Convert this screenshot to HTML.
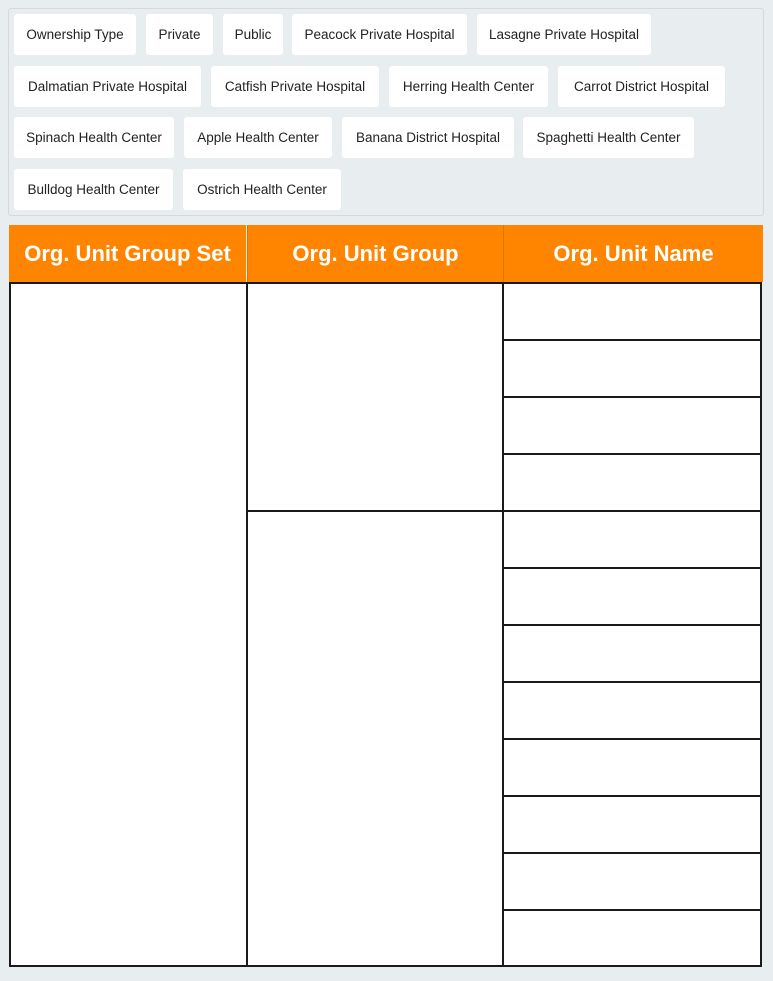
<!DOCTYPE html><html><head><style>
body{margin:0;width:773px;height:981px;background:#e8edf0;position:relative;overflow:hidden;font-family:"Liberation Sans",sans-serif}
.p{position:absolute;left:8px;top:8px;width:754px;height:206px;border:1px solid #d3d9dd;border-radius:3px;background:#e8edf0}
.c{position:absolute;height:41px;line-height:42px;background:#fff;border-radius:3px;font-size:13.5px;color:#222;text-align:center;white-space:nowrap}
.h{position:absolute;top:225px;height:57px;background:#ff8500;color:#fff;font-weight:bold;font-size:22px;line-height:58px;text-align:center}
.w{position:absolute;left:9px;top:282px;width:753px;height:685px;background:#fff}
.v{position:absolute;width:2px;background:#1a1a1a}
.l{position:absolute;height:2px;background:#1a1a1a}
</style></head><body>
<div class="p"></div>
<div class="c" style="left:14px;top:14px;width:122px">Ownership Type</div>
<div class="c" style="left:146px;top:14px;width:67px">Private</div>
<div class="c" style="left:223px;top:14px;width:60px">Public</div>
<div class="c" style="left:292px;top:14px;width:175px">Peacock Private Hospital</div>
<div class="c" style="left:477px;top:14px;width:174px">Lasagne Private Hospital</div>
<div class="c" style="left:14px;top:66px;width:187px">Dalmatian Private Hospital</div>
<div class="c" style="left:211px;top:66px;width:168px">Catfish Private Hospital</div>
<div class="c" style="left:389px;top:66px;width:159px">Herring Health Center</div>
<div class="c" style="left:558px;top:66px;width:167px">Carrot District Hospital</div>
<div class="c" style="left:14px;top:117px;width:160px">Spinach Health Center</div>
<div class="c" style="left:184px;top:117px;width:148px">Apple Health Center</div>
<div class="c" style="left:342px;top:117px;width:172px">Banana District Hospital</div>
<div class="c" style="left:523px;top:117px;width:171px">Spaghetti Health Center</div>
<div class="c" style="left:14px;top:169px;width:159px">Bulldog Health Center</div>
<div class="c" style="left:183px;top:169px;width:158px">Ostrich Health Center</div>
<div class="h" style="left:9px;width:237px">Org. Unit Group Set</div>
<div class="h" style="left:247px;width:255px;border-left:1px solid #e07400">Org. Unit Group</div>
<div class="h" style="left:503px;width:259px;border-left:1px solid #e07400">Org. Unit Name</div>
<div class="w"></div>
<div class="v" style="left:9px;top:282px;height:685px"></div>
<div class="v" style="left:246px;top:282px;height:685px"></div>
<div class="v" style="left:502px;top:282px;height:685px"></div>
<div class="v" style="left:760px;top:282px;height:685px"></div>
<div class="l" style="left:9px;top:282px;width:753px"></div>
<div class="l" style="left:9px;top:965px;width:753px"></div>
<div class="l" style="left:246px;top:510px;width:516px"></div>
<div class="l" style="left:502px;top:339px;width:260px"></div>
<div class="l" style="left:502px;top:396px;width:260px"></div>
<div class="l" style="left:502px;top:453px;width:260px"></div>
<div class="l" style="left:502px;top:567px;width:260px"></div>
<div class="l" style="left:502px;top:624px;width:260px"></div>
<div class="l" style="left:502px;top:681px;width:260px"></div>
<div class="l" style="left:502px;top:738px;width:260px"></div>
<div class="l" style="left:502px;top:795px;width:260px"></div>
<div class="l" style="left:502px;top:852px;width:260px"></div>
<div class="l" style="left:502px;top:909px;width:260px"></div>
</body></html>
